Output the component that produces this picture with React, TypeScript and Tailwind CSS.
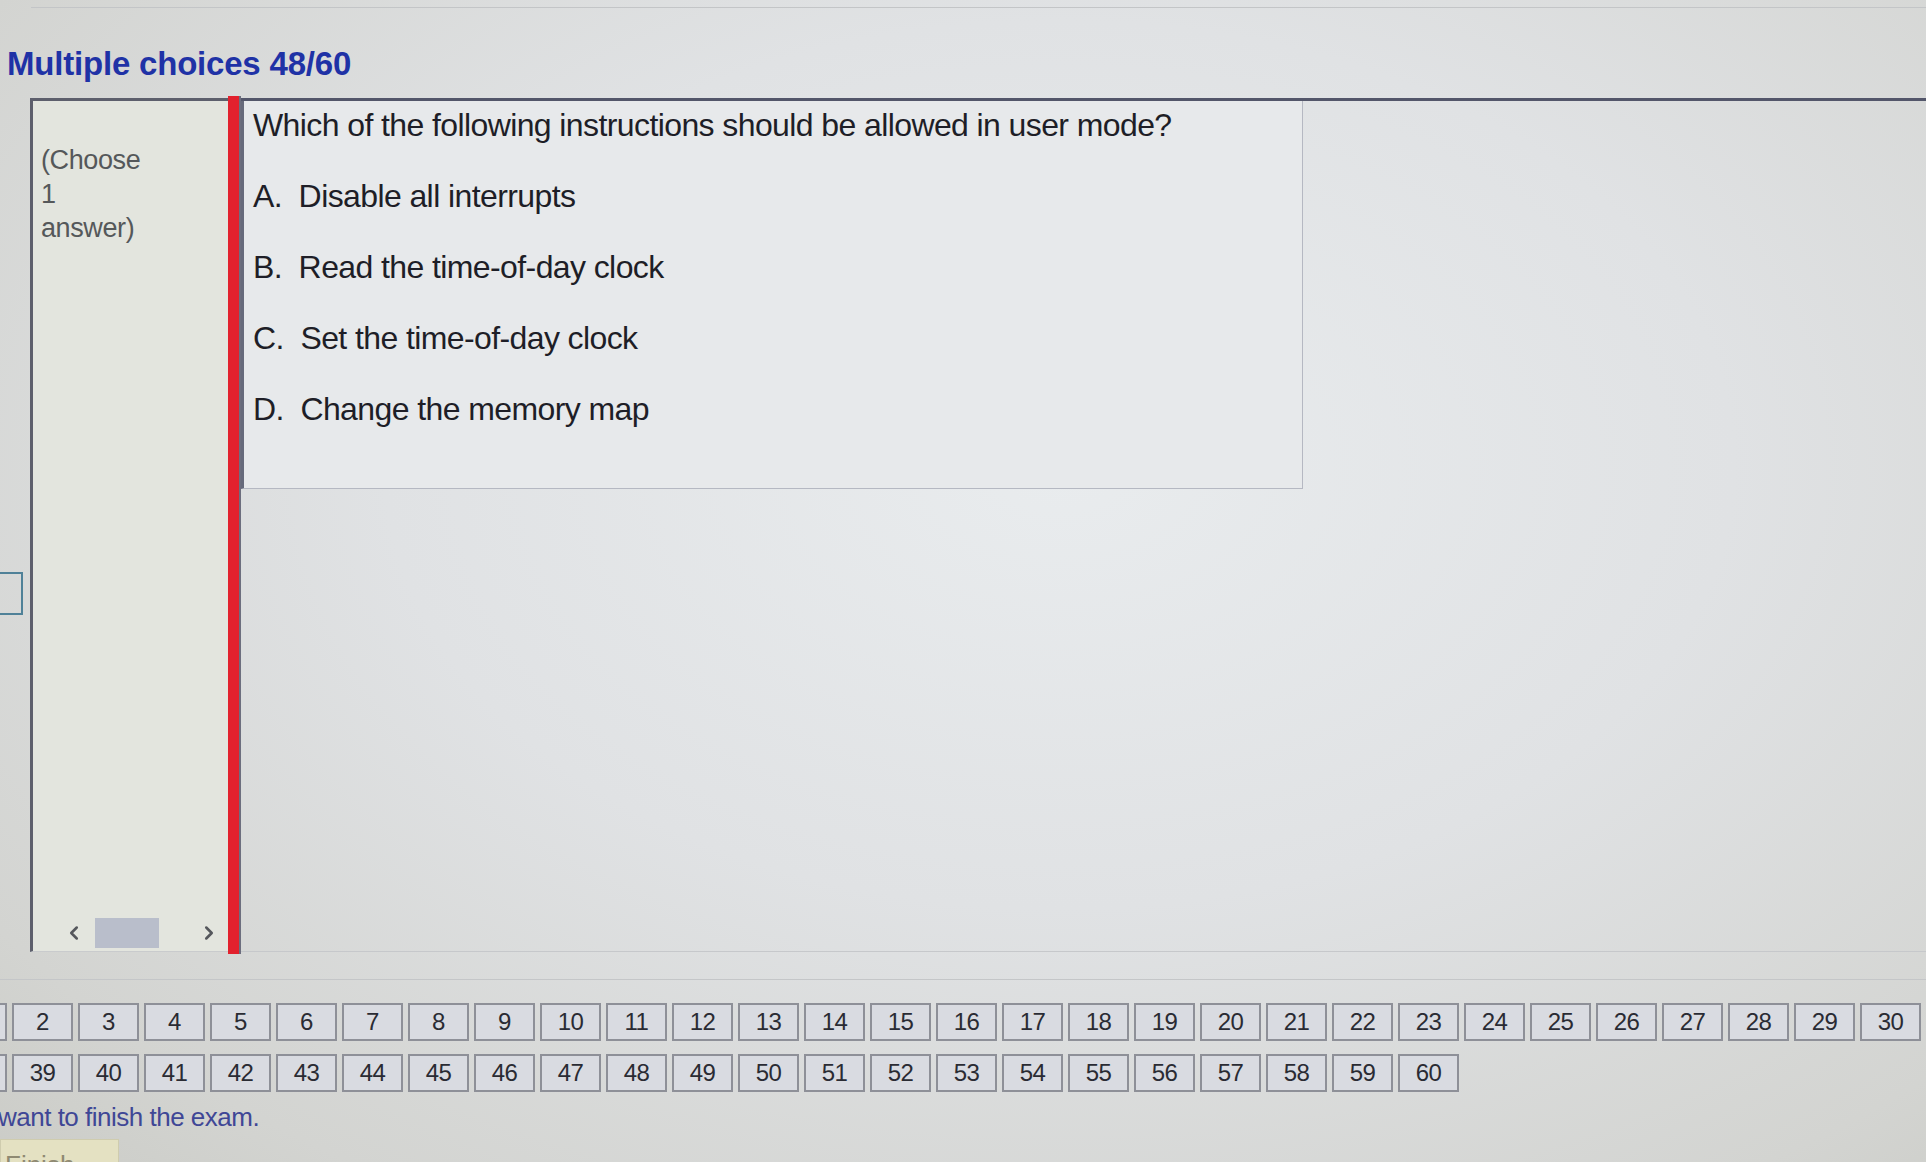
import React from "react";
import { ChevronLeft, ChevronRight } from "lucide-react";

const options = [
  "A.  Disable all interrupts",
  "B.  Read the time-of-day clock",
  "C.  Set the time-of-day clock",
  "D.  Change the memory map",
];

const nums = Array.from({ length: 60 }, (_, i) => i + 1);

export default function App() {
  return (
    <div
      className="relative w-[1926px] h-[1162px] overflow-hidden bg-[radial-gradient(ellipse_at_55%_40%,#e9ecee_0%,#e0e2e4_45%,#d3d4d1_85%,#cbccc7_100%)] text-[#23232b]"
      style={{ fontFamily: '"Liberation Sans", Arial, sans-serif' }}
    >
      {/* top strip remnant */}
      <div className="ml-[31px] h-[8px] border-b border-[#c3c5c7]" />

      {/* title */}
      <div className="mt-[36px] pl-[7px] text-[33px] leading-[40px] font-bold tracking-[-0.2px] text-[#1f32a6]">
        Multiple choices 48/60
      </div>

      {/* main row */}
      <div className="mt-[14px] flex h-[854px]">
        {/* left cut-off column */}
        <div className="w-[30px] shrink-0">
          <div className="mt-[474px] h-[43px] w-[23px] border-y-2 border-r-2 border-[#4f8198]" />
        </div>

        {/* left panel */}
        <div className="flex w-[198px] shrink-0 flex-col border-l-[3px] border-t-[3px] border-b border-l-[#5d5f6c] border-t-[#5d5f6c] border-b-[#c9cbcd] bg-[#e3e5de]">
          <div className="pl-[8px] pt-[42px] text-[27px] leading-[34px] tracking-[-0.4px] text-[#55585a]">
            <div>(Choose</div>
            <div>1</div>
            <div>answer)</div>
          </div>
          <div className="mt-auto mb-[3px] flex h-[30px] items-center pl-[30px] pr-[8px]">
            <ChevronLeft size={22} strokeWidth={2.8} className="text-[#55575c]" />
            <div className="ml-[10px] h-[30px] w-[64px] bg-[#b9becb]" />
            <ChevronRight size={22} strokeWidth={2.8} className="ml-auto text-[#55575c]" />
          </div>
        </div>

        {/* red bar */}
        <div className="-mt-[2px] h-[858px] w-[13px] shrink-0 border-r-[2px] border-[#6c6e7e] bg-[#e2212d]" />

        {/* right area */}
        <div className="flex-1 border-t-[3px] border-b border-t-[#53566a] border-b-[#c6c8cb]">
          <div className="h-[388px] w-[1062px] border-l-[3px] border-r border-b border-l-[#676a7b] border-r-[#b5b8c2] border-b-[#b5b8c2] bg-[#e7e9eb] pl-[9px] pt-[4px] text-[32px] leading-[40px] tracking-[-0.6px] text-[#1e1e27]">
            <div>Which of the following instructions should be allowed in user mode?</div>
            {options.map((o) => (
              <div key={o} className="mt-[31px] whitespace-pre">
                {o}
              </div>
            ))}
          </div>
        </div>
      </div>

      {/* full-width divider */}
      <div className="h-[28px] border-b border-[#c4c6c8]" />

      {/* question number grid (row of 37, left and right ends cropped) */}
      <div className="mt-[23px] -ml-[54px] grid grid-cols-[repeat(37,61px)] gap-x-[5px] gap-y-[13px]">
        {nums.map((n) => (
          <div
            key={n}
            className="flex h-[38px] items-center justify-center border-2 border-[#8e9098] bg-[#d9dbe1] text-[24px] leading-none tracking-[-0.5px] text-[#2a2b33]"
          >
            {n}
          </div>
        ))}
      </div>

      {/* finish note */}
      <div className="mt-[11px] -ml-[2px] text-[26px] leading-[28px] tracking-[-0.5px] text-[#3f4796]">
        want to finish the exam.
      </div>
      <div className="mt-[8px] h-[40px] w-[119px] border border-[#cfccae] bg-[#e4e1c2] pl-[4px] pt-[10px] text-[26px] leading-[30px] text-[#8f8a72]">
        Finish
      </div>
    </div>
  );
}
